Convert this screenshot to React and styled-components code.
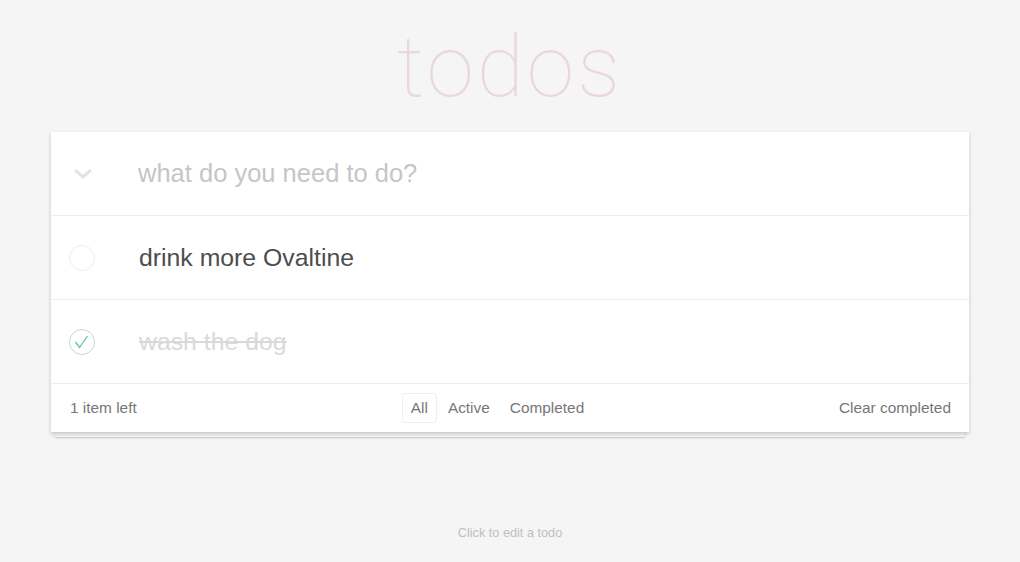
import * as React from 'react';
import styled, { createGlobalStyle } from 'styled-components';

const GlobalStyle = createGlobalStyle`
    html, body {
        margin: 0;
        padding: 0;
    }
    body {
        background: #f5f5f5;
        color: #4d4d4d;
        font-family: "Liberation Sans", Arial, sans-serif;
        -webkit-font-smoothing: antialiased;
    }
`;

const Page = styled.div`
    max-width: 918px;
    margin: 0 auto;
    padding-top: 17px;
`;

const Title = styled.h1`
    margin: 0;
    height: 115px;
    text-align: center;
    font-family: Roboto, "Liberation Sans", sans-serif;
    font-size: 86px;
    font-weight: 100;
    letter-spacing: 3px;
    line-height: 100px;
    color: rgba(175, 47, 47, 0.15);
`;

const TodoApp = styled.section`
    position: relative;
    background: #fff;
    box-shadow: 0 2px 4px 0 rgba(0, 0, 0, 0.2);

    &::after {
        content: '';
        position: absolute;
        top: 100%;
        left: 4px;
        right: 4px;
        height: 5px;
        background: #f6f6f6;
        box-shadow: 0 1px 2px rgba(0, 0, 0, 0.2);
        z-index: -1;
    }
`;

const Header = styled.header`
    display: flex;
    align-items: center;
    height: 83px;
`;

const ToggleAll = styled.div`
    width: 87px;
    display: flex;
    padding-left: 22px;
    box-sizing: border-box;
`;

const NewTodo = styled.input`
    flex: 1;
    border: none;
    outline: none;
    background: transparent;
    font-family: "Liberation Sans", Arial, sans-serif;
    font-size: 25.5px;
    color: #4d4d4d;
    padding: 0;
    &::placeholder {
        color: #c6c6c6;
    }
`;

const List = styled.ul`
    list-style: none;
    margin: 0;
    padding: 0;
`;

const Item = styled.li`
    display: flex;
    align-items: center;
    height: 83px;
    border-top: 1px solid #ededed;
`;

const Check = styled.div`
    width: 88px;
    padding-left: 17px;
    box-sizing: border-box;
    display: flex;
    align-items: center;
`;

const Label = styled.label`
    font-size: 24.8px;
    color: ${p => (p.$done ? '#d9d9d9' : '#4d4d4d')};
    text-decoration: ${p => (p.$done ? 'line-through' : 'none')};
`;

const Footer = styled.footer`
    display: flex;
    align-items: center;
    height: 48px;
    padding: 0 18px 0 19px;
    border-top: 1px solid #ededed;
    font-size: 15.4px;
    color: #777;
`;

const Count = styled.span`
    flex: 1;
`;

const Filters = styled.ul`
    list-style: none;
    margin: 0 26px 0 0;
    padding: 0;
    display: flex;
`;

const FilterLink = styled.a`
    display: block;
    padding: 5px 8px;
    margin: 0 1px;
    border: 1px solid ${p => (p.$selected ? 'rgba(175, 47, 47, 0.1)' : 'transparent')};
    border-radius: 3px;
    color: inherit;
    text-decoration: none;
    line-height: 18px;
`;

const ClearCompleted = styled.span`
    flex: 1;
    text-align: right;
`;

const Info = styled.footer`
    margin-top: 94px;
    text-align: center;
    font-size: 12.7px;
    color: #bfbfbf;
`;

const Circle = ({ done }) => (
    <svg width="28" height="28" viewBox="0 0 28 28">
        <circle cx="14" cy="14" r="12.5" fill="none" stroke={done ? '#bddad5' : '#ededed'} strokeWidth="1" />
        {done && <path d="M7.5 14l4 5.5L19.5 8" fill="none" stroke="#5dc2af" strokeWidth="1.3" />}
    </svg>
);

const App = () => {
    return (
        <Page>
            <GlobalStyle />
            <Title>todos</Title>
            <TodoApp>
                <Header>
                    <ToggleAll>
                        <svg width="20" height="12" viewBox="0 0 20 12">
                            <path d="M2 2l8 7 8-7" fill="none" stroke="#e3e3e3" strokeWidth="3" />
                        </svg>
                    </ToggleAll>
                    <NewTodo placeholder="what do you need to do?" />
                </Header>
                <List>
                    <Item>
                        <Check><Circle /></Check>
                        <Label>drink more Ovaltine</Label>
                    </Item>
                    <Item>
                        <Check><Circle done /></Check>
                        <Label $done>wash the dog</Label>
                    </Item>
                </List>
                <Footer>
                    <Count>1 item left</Count>
                    <Filters>
                        <li><FilterLink $selected>All</FilterLink></li>
                        <li><FilterLink>Active</FilterLink></li>
                        <li><FilterLink>Completed</FilterLink></li>
                    </Filters>
                    <ClearCompleted>Clear completed</ClearCompleted>
                </Footer>
            </TodoApp>
            <Info>Click to edit a todo</Info>
        </Page>
    );
};

export default App;
